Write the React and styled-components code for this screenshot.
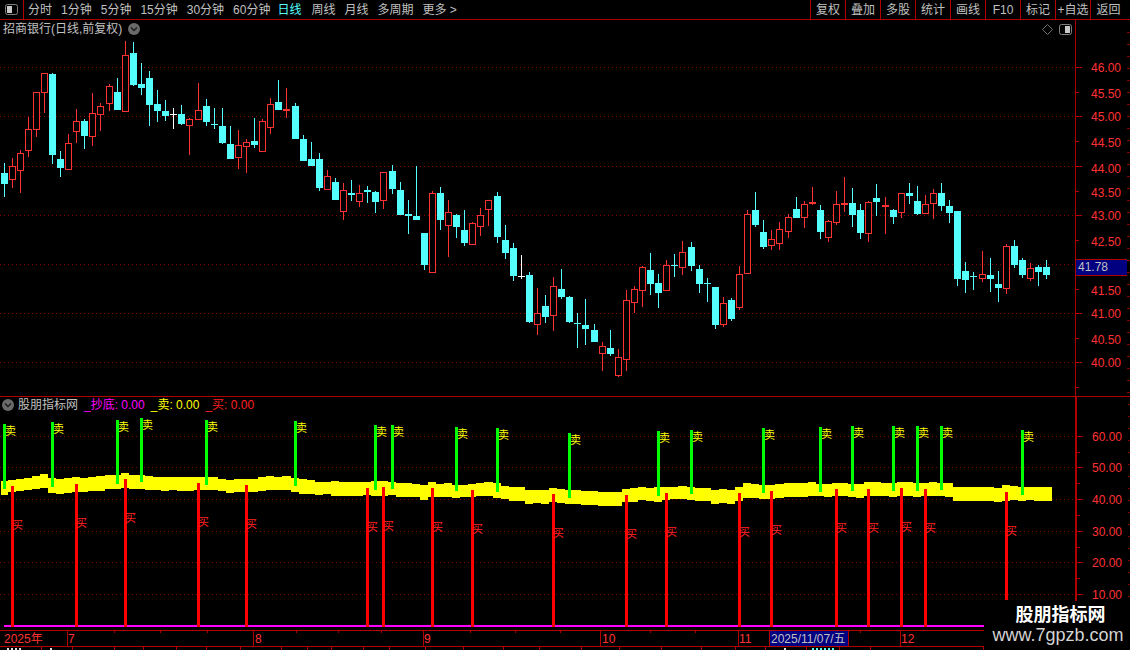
import React from 'react';
import styled, { createGlobalStyle } from 'styled-components';

const FONT = '"Liberation Sans", "Noto Sans CJK SC", sans-serif';
const LINE = '#b00000';
const GRID = '#8c0000';
const RED = '#ff3232';
const CYAN = '#54ffff';
const GREY = '#c0c0c0';

// type, high, body top, body bottom, low
const CANDLES = [
  ['d',163,173,184,197],['u',158,166,179,188],['u',150,153,170,193],['u',117,129,150,157],['u',92,92,129,137],
  ['u',73,73,92,113],['d',73,74,155,164],['d',151,159,168,177],['u',134,143,169,169],['u',109,121,131,143],
  ['d',119,121,136,149],['u',93,113,136,146],['u',103,106,114,131],['u',84,86,103,111],['d',78,92,110,110],
  ['u',41,55,111,111],['d',42,53,85,86],['d',63,84,88,95],['d',71,78,105,126],['d',90,104,111,122],
  ['d',100,111,116,121],['w',108,114,115,129],['d',105,114,124,125],['u',118,119,125,155],['u',83,110,119,119],
  ['d',99,106,122,126],['d',108,124,125,129],['d',108,126,143,144],['d',126,144,159,159],['u',130,145,157,169],
  ['u',139,142,146,173],['d',118,141,145,148],['u',119,121,151,151],['u',98,104,127,134],['d',80,102,110,110],
  ['r',88,109,111,118],['d',103,106,139,139],['d',135,139,161,161],['d',142,159,166,166],['d',153,159,188,191],
  ['u',170,176,189,189],['d',178,182,200,200],['u',183,190,211,220],['d',180,193,195,201],['u',185,193,201,207],
  ['d',186,190,192,203],['d',191,192,202,213],['u',172,172,200,209],['d',165,171,189,194],['d',182,190,215,215],
  ['d',200,214,216,234],['d',166,216,220,220],['d',233,233,265,270],['u',191,193,272,272],['d',187,193,220,230],
  ['u',200,212,225,257],['d',214,215,227,238],['d',210,230,243,246],['u',222,223,244,244],['u',208,215,226,236],
  ['u',200,200,209,226],['d',192,196,237,243],['d',225,240,253,259],['d',243,248,276,281],['w',255,276,277,279],
  ['d',272,275,322,323],['u',288,313,324,335],['d',295,306,317,323],['u',277,286,315,331],['d',269,289,297,299],
  ['d',296,297,322,323],['d',313,323,324,348],['d',299,325,329,345],['d',324,330,342,342],['u',342,346,353,371],
  ['d',330,348,354,356],['u',349,357,375,377],['u',290,300,359,371],['u',286,289,302,313],['u',266,267,290,307],
  ['d',253,270,284,295],['d',274,283,293,308],['u',260,265,290,290],['d',254,265,266,277],['u',241,252,267,275],
  ['d',242,247,266,271],['d',265,269,284,293],['d',278,283,284,302],['d',287,287,325,329],['u',297,303,324,327],
  ['d',298,300,319,321],['u',266,274,307,310],['u',210,214,273,273],['d',192,210,225,227],['d',220,232,247,249],
  ['u',230,239,245,250],['u',222,229,243,250],['u',214,217,231,238],['d',197,209,218,218],['u',201,204,217,228],
  ['r',187,202,204,205],['d',205,210,232,239],['u',220,221,237,242],['u',191,204,222,225],['r',177,203,205,212],
  ['d',188,203,215,227],['d',204,210,233,239],['u',201,202,233,242],['d',184,198,202,216],['r',197,205,207,234],
  ['d',209,210,217,224],['u',193,193,212,218],['d',183,193,196,204],['d',186,201,214,215],['u',195,204,213,214],
  ['u',189,193,203,219],['d',183,193,206,211],['d',200,206,213,223],['d',211,211,279,286],['d',262,271,280,293],
  ['d',272,276,277,290],['u',251,274,278,282],['d',258,275,279,292],['d',271,284,288,302],['u',244,246,288,294],
  ['d',240,246,265,268],['d',258,260,275,278],['u',263,268,278,281],['d',265,267,272,286],['d',260,267,275,279],
];

// the bars sit 8px apart, with one extra pixel at these candles
const JUMPS = [13, 24, 36, 48, 61, 73, 85, 97, 109, 121];
const colOf = i => 4 + 8 * i + JUMPS.filter(j => j <= i).length;

// yellow band, one [top, bottom] per candle
const BAND = [
  [481,495],[480,492],[479,491],[478,490],[476,489],[474,488],[478,493],[479,494],[478,493],[477,492],
  [478,492],[477,491],[476,491],[475,489],[475,489],[473,488],[475,489],[475,489],[476,490],[477,490],
  [477,491],[477,490],[477,491],[477,491],[477,490],[477,490],[477,490],[479,491],[480,493],[479,492],
  [479,492],[479,492],[477,491],[476,490],[477,490],[476,490],[478,492],[479,494],[480,494],[482,495],
  [482,494],[481,496],[482,496],[482,496],[482,496],[482,495],[481,496],[481,496],[482,495],[483,497],
  [483,497],[484,497],[485,500],[482,497],[484,497],[483,497],[485,498],[485,497],[484,497],[483,496],
  [482,496],[483,498],[486,499],[487,501],[487,501],[490,504],[490,503],[490,504],[488,502],[489,503],
  [490,504],[490,504],[491,505],[491,505],[492,506],[492,506],[492,506],[489,502],[488,502],[487,500],
  [488,501],[487,502],[487,500],[487,499],[486,499],[487,500],[488,501],[488,501],[490,504],[489,503],
  [490,504],[487,501],[483,498],[484,498],[485,499],[485,499],[484,498],[483,497],[483,497],[483,497],
  [482,496],[484,496],[484,497],[483,496],[483,496],[484,497],[484,498],[482,496],[482,496],[483,496],
  [483,497],[482,496],[482,496],[483,497],[483,496],[482,496],[483,496],[483,497],[487,501],[487,501],
  [487,501],[487,501],[487,501],[488,502],[485,501],[486,500],[487,501],[487,500],[487,501],[487,501],
];

const bandPath = () => {
  const pts = [];
  BAND.forEach(([top], i) => pts.push([i === 0 ? 1 : colOf(i) - 4, top], [i === BAND.length - 1 ? 1052 : colOf(i + 1) - 4, top]));
  for (let i = BAND.length - 1; i >= 0; i--) {
    pts.push([i === BAND.length - 1 ? 1052 : colOf(i + 1) - 4, BAND[i][1]], [i === 0 ? 1 : colOf(i) - 4, BAND[i][1]]);
  }
  return pts.map(p => p.join(',')).join(' ');
};

// x, top, bottom
const SELL = [
  [3,424,489],[51,422,487],[116,420,484],[140,418,482],[205,420,485],[294,421,486],[374,425,490],[391,425,489],
  [455,427,491],[496,428,492],[568,433,498],[657,431,496],[690,430,494],[762,428,493],[819,427,492],[851,426,491],
  [892,426,491],[916,426,491],[940,426,490],[1021,430,495],
];
const BUY = [
  [11,486,627],[75,484,627],[124,479,627],[197,483,627],[245,485,627],[366,488,627],[382,487,627],[431,488,627],
  [471,490,627],[552,494,627],[625,495,627],[665,493,627],[738,493,627],[770,491,627],[835,489,627],[867,489,627],
  [900,488,627],[924,489,627],[1005,492,600],
];

const PERIODS = ['分时', '1分钟', '5分钟', '15分钟', '30分钟', '60分钟', '日线', '周线', '月线', '多周期', '更多 >'];
const ACTIONS = ['复权', '叠加', '多股', '统计', '画线', 'F10', '标记', '+自选', '返回'];
const PRICES = [
  ['46.00',67],['45.50',93],['45.00',116],['44.50',142],['44.00',168],['43.50',192],['43.00',215],
  ['42.50',241],['41.50',290],['41.00',313],['40.50',339],['40.00',362],
];
const PRICE_GRID = [67, 116, 166, 215, 264, 313, 362];
const LEVELS = [['60.00',436],['50.00',467],['40.00',499],['30.00',531],['20.00',562],['10.00',594]];
const TIME_LABELS = [['2025年',4],['7',68],['8',255],['9',424],['10',602],['11',739],['12',901]];
const TIME_LINES = [67, 253, 423, 600, 738, 769, 848, 900];
const TIME_TICKS = [114, 160, 207, 296, 338, 381, 470, 515, 560, 650, 695, 860];
// only the top pixels of this tab row are on screen: width, mark offset, mark width
const TABS = [
  [42,7,15],[31,8,2],[42],[29],[33],[30],[34],[41],[26],[24],[32],[26],[36],[38],[40],[36],[42],[38],[42],
  [40],[34],[30],[41,18,3],[33,5,22,true],[31],[113],
];

const Global = createGlobalStyle`
  * { box-sizing: border-box; }
  html, body { margin: 0; background: #000; }
  body { font-family: ${FONT}; }
`;

const Screen = styled.div`
  position: relative;
  width: 1130px;
  height: 650px;
  background: #000;
  overflow: hidden;
  display: flex;
  flex-direction: column;
  font-size: 12px;
  color: ${GREY};
`;

const TopBar = styled.header`
  flex: 0 0 20px;
  display: flex;
  align-items: stretch;
  border-bottom: 1px solid ${LINE};
  line-height: 18px;
  overflow: hidden;
`;

const IconCell = styled.div`
  width: 24px;
  border-right: 1px solid ${LINE};
  display: flex;
  align-items: center;
  justify-content: center;
`;

const Periods = styled.nav`
  display: flex;
  gap: 9px;
  padding: 1px 0 0 4px;
`;

const Period = styled.span`
  white-space: pre;
  margin-left: ${p => (p.$active ? -2 : 0)}px;
  margin-right: ${p => (p.$active ? 1 : 0)}px;
  color: ${p => (p.$active ? CYAN : GREY)};
`;

const Actions = styled.div`
  margin-left: auto;
  display: flex;
`;

const Action = styled.button`
  flex: 0 0 ${p => (p.$last ? 40 : 35)}px;
  padding: 1px ${p => (p.$last ? 4 : 0)}px 0 0;
  background: none;
  border: 0;
  border-left: 1px solid ${LINE};
  color: ${GREY};
  font: inherit;
  white-space: nowrap;
  text-align: center;
`;

const Panel = styled.section`
  display: flex;
  flex: 0 0 ${p => p.$h}px;
  border-top: ${p => (p.$ruled ? `1px solid ${LINE}` : 'none')};
`;

const Plot = styled.div`
  position: relative;
  flex: 0 0 1075px;
`;

const Chart = styled.svg`
  display: block;
  width: 1075px;
  height: 100%;
  shape-rendering: crispEdges;
`;

const ChartTitle = styled.div`
  position: absolute;
  top: ${p => p.$top}px;
  left: ${p => p.$left}px;
  display: flex;
  align-items: center;
  gap: 6px;
  line-height: 14px;
  white-space: pre;
`;

const IndicatorName = styled.span`
  margin-left: -2px;
`;

const Legend = styled.span`
  color: ${p => p.$color};
`;

const ChartTools = styled.div`
  position: absolute;
  top: 4px;
  right: 3px;
  display: flex;
  align-items: center;
  gap: 6px;
`;

const Axis = styled.aside`
  position: relative;
  flex: 1;
  border-left: ${p => p.$w}px solid ${LINE};
  overflow: hidden;
`;

const AxisMarks = styled.svg`
  position: absolute;
  top: 0;
  left: 0;
  display: block;
  width: 55px;
  height: 100%;
  shape-rendering: crispEdges;
`;

const AxisLabel = styled.span`
  position: absolute;
  left: 15px;
  top: ${p => p.$y}px;
  line-height: 14px;
  color: ${RED};
`;

const PriceTag = styled.span`
  position: absolute;
  left: 0;
  top: 239px;
  width: 51px;
  height: 17px;
  padding-left: 2px;
  background: #000080;
  border-top: 1px solid ${LINE};
  border-bottom: 1px solid ${LINE};
  line-height: 15px;
  color: ${GREY};
`;

const SignalText = styled.text`
  font-family: ${FONT};
  font-size: 11px;
  fill: ${p => p.$color};
  shape-rendering: auto;
`;

const TimeAxis = styled.div`
  position: relative;
  flex: 0 0 17px;
  border-top: 1px solid ${LINE};
  border-bottom: 1px solid ${LINE};
`;

const TimeLine = styled.i`
  position: absolute;
  top: 0;
  bottom: 0;
  left: ${p => p.$x}px;
  width: 1px;
  background: ${LINE};
`;

const TimeTick = styled.i`
  position: absolute;
  top: 0;
  left: ${p => p.$x}px;
  width: 1px;
  height: 2px;
  background: ${LINE};
`;

const TimeLabel = styled.span`
  position: absolute;
  top: 1px;
  left: ${p => p.$x}px;
  line-height: 15px;
  color: ${RED};
`;

const CursorDate = styled.span`
  position: absolute;
  top: 0;
  left: 770px;
  width: 78px;
  height: 15px;
  padding: 1px 0 0 1px;
  background: #000080;
  line-height: 15px;
  color: ${GREY};
  white-space: nowrap;
  overflow: hidden;
`;

const TabStrip = styled.div`
  flex: 0 0 3px;
  display: flex;
  overflow: hidden;
`;

const Tab = styled.span`
  flex: 0 0 ${p => p.$w}px;
  height: 3px;
  border-right: 1px solid ${LINE};
  padding-left: ${p => p.$offset}px;
`;

const TabMark = styled.i`
  display: block;
  width: ${p => p.$w}px;
  height: 2px;
  margin-top: 1px;
  background: repeating-linear-gradient(90deg, ${p => (p.$active ? CYAN : '#e0e0e0')} 0 2px, transparent 2px 4px);
`;

const Watermark = styled.div`
  position: absolute;
  left: 984px;
  top: 601px;
  width: 146px;
  height: 49px;
  background: #000;
  display: flex;
  flex-direction: column;
  align-items: center;
`;

const WatermarkName = styled.strong`
  font-size: 18px;
  line-height: 24px;
  margin: 2px 0 0 7px;
  color: #fff;
`;

const WatermarkUrl = styled.span`
  font-size: 18px;
  line-height: 16px;
  margin-left: 2px;
  color: #d4d4d4;
`;

const SidebarIcon = ({ flip }) => (
  <svg width="13" height="11" viewBox="0 0 13 11">
    <rect x="0.5" y="0.5" width="12" height="10" rx="2" fill="none" stroke="#808080" />
    <rect x={flip ? 6 : 2} y="2" width="5" height="7" fill="#c8c8c8" />
  </svg>
);

const RoundToggle = () => (
  <svg width="12" height="12" viewBox="0 0 12 12">
    <circle cx="6" cy="6" r="6" fill="#6a6a6a" />
    <path d="M3 4.6 L6 7.6 L9 4.6" fill="none" stroke="#1c1c1c" strokeWidth="1.4" />
  </svg>
);

const Diamond = () => (
  <svg width="11" height="11" viewBox="0 0 11 11">
    <path d="M5.5 0.5 L10.5 5.5 L5.5 10.5 L0.5 5.5 Z" fill="none" stroke="#6e6e6e" />
  </svg>
);

const Candle = ({ data, col }) => {
  const [type, high, top, bottom, low] = data;
  const color = type === 'd' ? CYAN : type === 'w' ? '#fff' : RED;
  const wick = (
    <>
      <rect x={col} y={high} width="1" height={Math.max(top - high, 0)} fill={color} />
      <rect x={col} y={bottom} width="1" height={Math.max(low - bottom, 0)} fill={color} />
    </>
  );
  if (type === 'u') {
    return (
      <g>
        {wick}
        <rect x={col - 2.5} y={top + 0.5} width="6" height={bottom - top} fill="#000" stroke={color} />
      </g>
    );
  }
  return (
    <g>
      {wick}
      <rect x={col - 3} y={top} width="7" height={Math.max(bottom - top, 1)} fill={color} />
    </g>
  );
};

const GridLines = ({ rows }) => rows.map(y => (
  <line key={y} x1="0" x2="1075" y1={y + 0.5} y2={y + 0.5} stroke={GRID} strokeDasharray="1 3" />
));

const EdgeTicks = ({ from, to }) => {
  const out = [];
  for (let y = from; y < to; y += 12) out.push(<rect key={y} x="51" y={y} width="4" height="1" fill={GRID} />);
  return out;
};

export default function App() {
  return (
    <Screen>
      <Global />
      <TopBar>
        <IconCell><SidebarIcon /></IconCell>
        <Periods>
          {PERIODS.map(p => <Period key={p} $active={p === '日线'}>{p}</Period>)}
        </Periods>
        <Actions>
          {ACTIONS.map(a => <Action key={a} $last={a === '返回'}>{a}</Action>)}
        </Actions>
      </TopBar>

      <Panel $h={376}>
        <Plot>
          <Chart viewBox="0 20 1075 376">
            <GridLines rows={PRICE_GRID} />
            {CANDLES.map((c, i) => <Candle key={i} data={c} col={colOf(i)} />)}
          </Chart>
          <ChartTitle $top={2} $left={3}>
            <span>招商银行(日线,前复权)</span>
            <RoundToggle />
          </ChartTitle>
          <ChartTools>
            <Diamond />
            <SidebarIcon flip />
          </ChartTools>
        </Plot>
        <Axis $w={1}>
          <AxisMarks viewBox="0 20 55 376">
            {PRICE_GRID.map(y => <rect key={y} x="0" y={y} width="6" height="1" fill={LINE} />)}
            {PRICE_GRID.map(y => <rect key={y} x="0" y={y + 25} width="3" height="1" fill={LINE} />)}
            <EdgeTicks from={32} to={396} />
          </AxisMarks>
          {PRICES.map(([t, y]) => <AxisLabel key={t} $y={y - 26}>{t}</AxisLabel>)}
          <PriceTag>41.78</PriceTag>
        </Axis>
      </Panel>

      <Panel $h={234} $ruled>
        <Plot>
          <Chart viewBox="0 397 1075 233">
            <GridLines rows={LEVELS.map(l => l[1])} />
            <polygon points={bandPath()} fill="#ffff00" />
            <rect x="4" y="625" width="1071" height="2" fill="#ff00ff" />
            {SELL.map(([x, top, bottom]) => (
              <g key={x}>
                <rect x={x} y={top} width="3" height={bottom - top} fill="#00ff00" />
                <SignalText x={x + 2} y={top + 11} $color="#ffff00">卖</SignalText>
              </g>
            ))}
            {BUY.map(([x, top, bottom]) => (
              <g key={x}>
                <rect x={x} y={top} width="3" height={bottom - top} fill="#ff0000" />
                <SignalText x={x + 1} y={top + 43} $color="#ff2020">买</SignalText>
              </g>
            ))}
          </Chart>
          <ChartTitle $top={1} $left={2}>
            <RoundToggle />
            <IndicatorName>股朋指标网</IndicatorName>
            <Legend $color="#ff00ff">_抄底: 0.00</Legend>
            <Legend $color="#ffff00">_卖: 0.00</Legend>
            <Legend $color="#ff2020">_买: 0.00</Legend>
          </ChartTitle>
        </Plot>
        <Axis $w={2}>
          <AxisMarks viewBox="0 397 55 233">
            {LEVELS.map(([t, y]) => <rect key={t} x="0" y={y} width="6" height="1" fill={LINE} />)}
            {LEVELS.map(([t, y]) => <rect key={t} x="0" y={y + 16} width="3" height="1" fill={LINE} />)}
            <EdgeTicks from={404} to={630} />
          </AxisMarks>
          {LEVELS.map(([t, y]) => <AxisLabel key={t} $y={y - 403}>{t}</AxisLabel>)}
        </Axis>
      </Panel>

      <TimeAxis>
        {TIME_LINES.map(x => <TimeLine key={x} $x={x} />)}
        {TIME_TICKS.map(x => <TimeTick key={x} $x={x} />)}
        {TIME_LABELS.map(([t, x]) => <TimeLabel key={t} $x={x}>{t}</TimeLabel>)}
        <CursorDate>2025/11/07/五</CursorDate>
      </TimeAxis>

      <TabStrip>
        {TABS.map(([w, offset = 0, markW, active], i) => (
          <Tab key={i} $w={w} $offset={offset}>
            {markW && <TabMark $w={markW} $active={active} />}
          </Tab>
        ))}
      </TabStrip>

      <Watermark>
        <WatermarkName>股朋指标网</WatermarkName>
        <WatermarkUrl>www.7gpzb.com</WatermarkUrl>
      </Watermark>
    </Screen>
  );
}
